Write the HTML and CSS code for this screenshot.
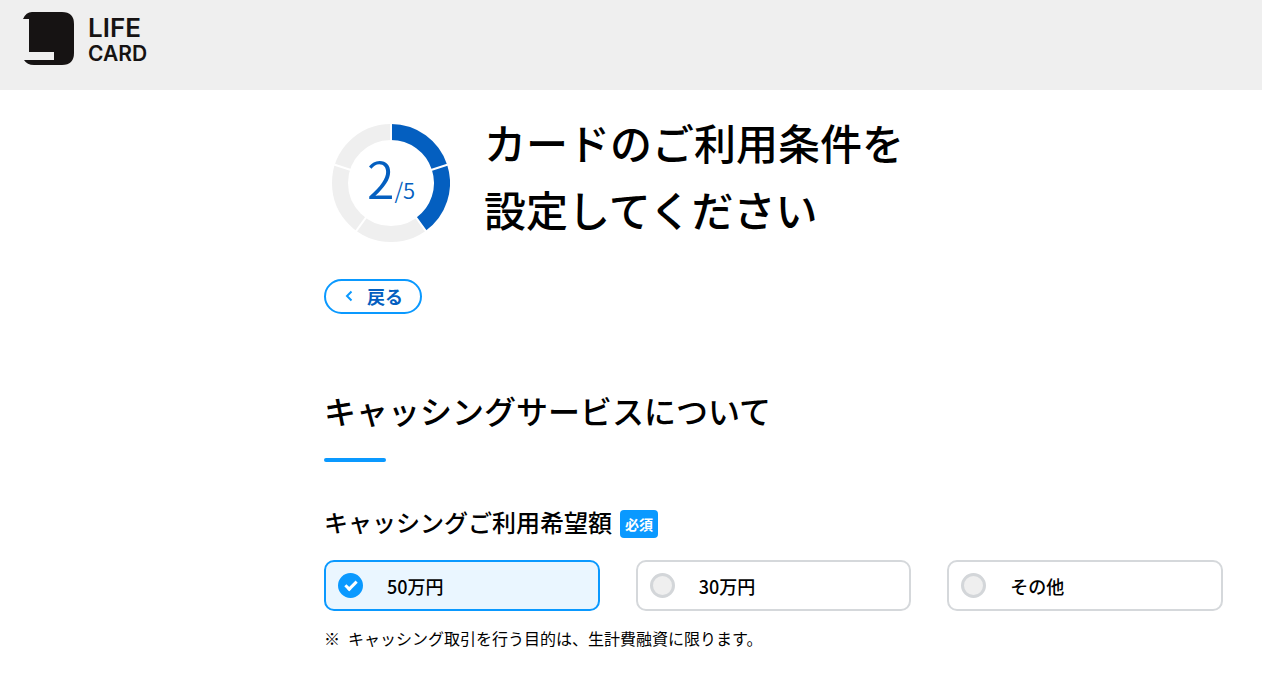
FILE: index.html
```html
<!DOCTYPE html>
<html lang="ja">
<head>
    <meta charset="UTF-8">
    <meta name="viewport" content="width=device-width, initial-scale=1.0">
    <title>LIFE CARD</title>
    <link rel="stylesheet" href="styles.css">
</head>
<body>
    <header class="header">
        <a class="logo" href="#">
            <svg class="logo-mark" viewBox="0 0 52 53" width="52" height="53" aria-hidden="true">
                <path fill="#161313" d="M10 0H40Q52 0 52 12V41Q52 53 40 53H12Q5 53 2 48H32V40H7V7H1Q4 0 10 0Z"/>
            </svg>
            <span class="logo-text">LIFE<br><span class="logo-card">CARD</span></span>
        </a>
    </header>

    <main class="main">
        <div class="intro">
            <div class="step">
                <svg class="step-ring" viewBox="-59 -59 118 118" aria-hidden="true">
                    <circle r="51" fill="none" stroke="#efefef" stroke-width="16"/>
                    <path d="M0 -51A51 51 0 0 1 29.98 41.26" fill="none" stroke="#045fc0" stroke-width="16"/>
                    <path d="M0 0V-60M0 0L57.06 -18.54M0 0L35.27 48.54M0 0L-35.27 48.54M0 0L-57.06 -18.54" stroke="#fff" stroke-width="2"/>
                </svg>
                <p class="step-count"><span class="step-now">2</span><span class="step-total">/5</span></p>
            </div>
            <h1 class="title">カードのご利用条件を<br>設定してください</h1>
        </div>

        <button type="button" class="back-button">
            <svg viewBox="0 0 8 12" width="8" height="12" aria-hidden="true">
                <path d="M6.5 1.5L2 6L6.5 10.5" fill="none" stroke="#0a99ff" stroke-width="2"/>
            </svg>
            戻る
        </button>

        <form>
            <h2 class="section-title">キャッシングサービスについて</h2>

            <fieldset class="field">
                <legend class="field-title">キャッシングご利用希望額 <span class="required">必須</span></legend>
                <div class="options">
                    <label class="option">
                        <input type="radio" name="amount" value="50" checked>
                        50万円
                    </label>
                    <label class="option">
                        <input type="radio" name="amount" value="30">
                        30万円
                    </label>
                    <label class="option">
                        <input type="radio" name="amount" value="other">
                        その他
                    </label>
                </div>
            </fieldset>
            <p class="note"><span>※</span><span>キャッシング取引を行う目的は、生計費融資に限ります。</span></p>
        </form>
    </main>
</body>
</html>
```
FILE: styles.css
```css
* {
    box-sizing: border-box;
}
body {
    margin: 0;
    background-color: #fff;
    color: #000;
    font-family: "Noto Sans CJK JP", sans-serif;
    font-size: 16px;
}
h1, h2, p {
    margin: 0;
}

/* header */
.header {
    height: 90px;
    padding: 12px 22px;
    background-color: #efefef;
}
.logo {
    display: inline-flex;
    gap: 14px;
    color: #161313;
    text-decoration: none;
    font-family: Inter, sans-serif;
    font-weight: 600;
}
.logo-mark {
    display: block;
}
.logo-text {
    padding-top: 4px;
    font-size: 26px;
    line-height: 24px;
}
.logo-card {
    font-size: 21px;
}

.main {
    padding: 18px 39px 24px 324px;
}

/* step and title */
.intro {
    display: flex;
    align-items: flex-end;
    gap: 34px;
    padding-left: 8px;
}
.step {
    display: grid;
    flex: none;
    place-items: center;
}
.step-ring, .step-count {
    grid-area: 1 / 1;
}
.step-ring {
    width: 118px;
    height: 118px;
}
.step-count {
    padding-top: 2px;
    color: #045fc0;
    font-weight: 350;
    line-height: 60px;
}
.step-now {
    font-size: 50px;
}
.step-total {
    font-size: 22px;
}
.title {
    font-size: 42px;
    font-weight: 500;
    line-height: 67px;
}

.back-button {
    display: flex;
    align-items: center;
    gap: 14px;
    height: 35px;
    margin-top: 37px;
    padding: 0 17px 2px 19px;
    border: 2px solid #0a99ff;
    border-radius: 18px;
    background-color: #fff;
    color: #045fc0;
    font-family: inherit;
    font-size: 18px;
    font-weight: 700;
    cursor: pointer;
}

/* form */
.section-title {
    margin-top: 72px;
    font-size: 32px;
    font-weight: 500;
    line-height: 48px;
}
.section-title::after {
    content: "";
    display: block;
    width: 62px;
    height: 4px;
    margin-top: 24px;
    border-radius: 2px;
    background-color: #0a99ff;
}
.field {
    margin: 42px 0 0;
    padding: 0;
    border: none;
}
.field-title {
    display: flex;
    align-items: center;
    gap: 8px;
    padding: 0;
    font-size: 24px;
    font-weight: 500;
    line-height: 36px;
}
.required {
    margin-top: 4px;
    padding: 0 5px;
    border-radius: 4px;
    background-color: #0a99ff;
    color: #fff;
    font-size: 14px;
    font-weight: 700;
    line-height: 28px;
}
.options {
    display: grid;
    grid-template-columns: repeat(3, 1fr);
    gap: 36px;
    margin-top: 20px;
}
.option {
    display: flex;
    align-items: center;
    gap: 24px;
    height: 51px;
    padding-left: 12px;
    border: 2px solid #d5d8db;
    border-radius: 10px;
    font-size: 18px;
    font-weight: 500;
    line-height: 24px;
    cursor: pointer;
}
.option:has(input:checked) {
    border-color: #0a99ff;
    background-color: #eaf6ff;
}
.option input {
    appearance: none;
    display: grid;
    place-items: center;
    width: 25px;
    height: 25px;
    margin: 0;
    border: 3px solid #d3d6d9;
    border-radius: 50%;
    background-color: #efefef;
}
.option input:checked {
    border-color: #0a99ff;
    background-color: #0a99ff;
}
.option input:checked::before {
    content: "";
    width: 9px;
    height: 4px;
    margin-bottom: 3px;
    border: solid #fff;
    border-width: 0 0 3px 3px;
    transform: rotate(-45deg);
}
.note {
    display: flex;
    gap: 8px;
    margin-top: 15px;
    line-height: 24px;
}
```
